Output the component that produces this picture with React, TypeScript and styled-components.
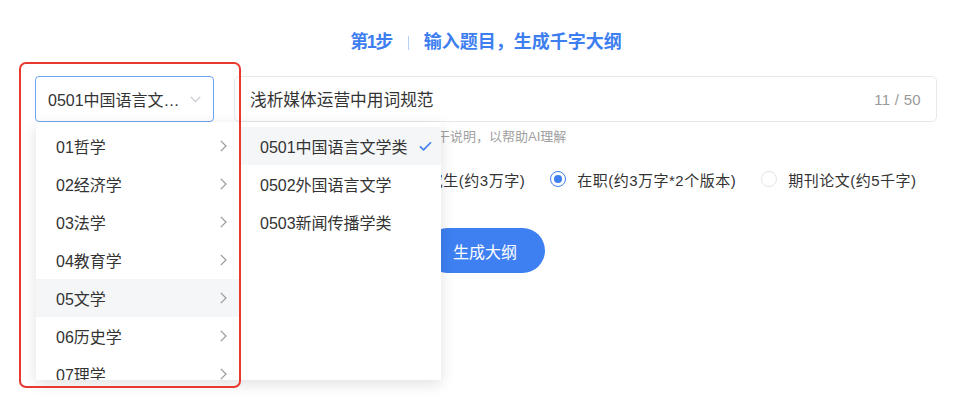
import React from "react";
import styled, { createGlobalStyle } from "styled-components";

const GlobalStyle = createGlobalStyle`
  * { box-sizing: border-box; }
  html, body { margin: 0; padding: 0; background: #ffffff; }
  body {
    font-family: "Liberation Sans", "Noto Sans CJK SC", sans-serif;
    color: #333333;
  }
`;

const Page = styled.div`
  position: relative;
  width: 970px;
  height: 399px;
  overflow: hidden;
  padding-top: 30px;
`;

const Title = styled.div`
  display: flex;
  justify-content: center;
  align-items: center;
  font-size: 18px;
  font-weight: 700;
  line-height: 25px;
  color: #3d7ef0;
  padding-left: 2px;
`;

const StepLabel = styled.span`
  letter-spacing: -1.5px;
`;

const Divider = styled.span`
  display: inline-block;
  width: 1px;
  height: 14px;
  background: #b9d0f6;
  margin: 0 15px 0 16px;
`;

const Main = styled.div`
  margin: 21px 33px 0 35px;
`;

const FieldRow = styled.div`
  display: flex;
  gap: 20px;
`;

const Select = styled.div`
  width: 179px;
  height: 46px;
  flex: none;
  border: 1px solid #6ea4f6;
  border-radius: 4px;
  padding: 0 12px 0 12px;
  display: flex;
  align-items: center;
  font-size: 16px;
  color: #333;
`;

const SelectText = styled.span`
  flex: 1;
  min-width: 0;
  white-space: nowrap;
  overflow: hidden;
  text-overflow: ellipsis;
`;

const InputBox = styled.div`
  flex: 1;
  height: 46px;
  border: 1px solid #e6e8ec;
  border-radius: 5px;
  padding: 0 15px 0 15px;
  display: flex;
  align-items: center;
  font-size: 16.7px;
  color: #333;
`;

const Counter = styled.span`
  margin-left: auto;
  font-size: 15px;
  letter-spacing: 0.3px;
  color: #999;
`;

const Hint = styled.div`
  margin: 6px 0 0 285px;
  font-size: 13px;
  line-height: 18px;
  color: #a0a0a0;
  white-space: nowrap;
`;

const RadioRow = styled.div`
  display: flex;
  gap: 25px;
  margin: 22px 0 0 201px;
  height: 22px;
  align-items: center;
`;

const RadioItem = styled.label`
  display: flex;
  align-items: center;
  gap: 11px;
  font-size: 15px;
  letter-spacing: 0.5px;
  color: #333;
  white-space: nowrap;
`;

const RadioCircle = styled.span<{ $checked?: boolean }>`
  width: 16px;
  height: 16px;
  flex: none;
  border-radius: 50%;
  border: 1px solid ${(p) => (p.$checked ? "#3d7ef0" : "#e2e5ea")};
  display: flex;
  align-items: center;
  justify-content: center;
  &::after {
    content: "";
    width: 8px;
    height: 8px;
    border-radius: 50%;
    background: ${(p) => (p.$checked ? "#3d7ef0" : "transparent")};
  }
`;

const ButtonRow = styled.div`
  display: flex;
  justify-content: center;
  margin-top: 38px;
`;

const PrimaryButton = styled.button`
  width: 120px;
  height: 45px;
  border: none;
  border-radius: 23px;
  background: #3e80f1;
  color: #ffffff;
  font-family: inherit;
  font-size: 16px;
  margin-left: -2px;
`;

const Popup = styled.div`
  position: absolute;
  left: 36px;
  top: 122px;
  display: flex;
  height: 258px;
  background: #ffffff;
  box-shadow: 0 4px 14px rgba(0, 0, 0, 0.12);
  overflow: hidden;
`;

const Column = styled.div<{ $width: number; $divider?: boolean }>`
  width: ${(p) => p.$width}px;
  padding-top: 5px;
  border-right: ${(p) => (p.$divider ? "1px solid #e8eaee" : "none")};
`;

const MenuItem = styled.div<{ $active?: boolean; $right: number }>`
  height: 38px;
  display: flex;
  align-items: center;
  justify-content: space-between;
  padding: 0 ${(p) => p.$right}px 0 20px;
  font-size: 16px;
  color: #333;
  white-space: nowrap;
  background: ${(p) => (p.$active ? "#f5f6f8" : "transparent")};
`;

const Annotation = styled.div`
  position: absolute;
  left: 19px;
  top: 62px;
  width: 222px;
  height: 326px;
  border: 2.5px solid #e8392e;
  border-radius: 7px;
  pointer-events: none;
`;

const ChevronDown = () => (
  <svg width="11" height="7" viewBox="0 0 11 7" fill="none">
    <path d="M0.8 0.8 L5.5 5.6 L10.2 0.8" stroke="#c3c7ce" strokeWidth="1.2" />
  </svg>
);

const ChevronRight = () => (
  <svg width="7" height="12" viewBox="0 0 7 12" fill="none">
    <path d="M0.8 0.8 L6 6 L0.8 11.2" stroke="#9a9a9a" strokeWidth="1.2" />
  </svg>
);

const Check = () => (
  <svg width="13" height="10" viewBox="0 0 13 10" fill="none">
    <path d="M1 5.4 L4.6 8.8 L12 1.2" stroke="#3d7ef0" strokeWidth="1.6" />
  </svg>
);

const categories = [
  "01哲学",
  "02经济学",
  "03法学",
  "04教育学",
  "05文学",
  "06历史学",
  "07理学",
];

const subCategories = ["0501中国语言文学类", "0502外国语言文学", "0503新闻传播学类"];

const options = [
  { label: "本科(约1万字)", checked: false },
  { label: "研究生(约3万字)", checked: false },
  { label: "在职(约3万字*2个版本)", checked: true },
  { label: "期刊论文(约5千字)", checked: false },
];

export default function App() {
  return (
    <>
      <GlobalStyle />
      <Page>
        <Title>
          <StepLabel>第1步</StepLabel>
          <Divider />
          <span>输入题目，生成千字大纲</span>
        </Title>
        <Main>
          <FieldRow>
            <Select>
              <SelectText>0501中国语言文学类</SelectText>
              <ChevronDown />
            </Select>
            <InputBox>
              <span>浅析媒体运营中用词规范</span>
              <Counter>11 / 50</Counter>
            </InputBox>
          </FieldRow>
          <Hint>可在题目后面添加若干说明，以帮助AI理解</Hint>
          <RadioRow>
            {options.map((o) => (
              <RadioItem key={o.label}>
                <RadioCircle $checked={o.checked} />
                {o.label}
              </RadioItem>
            ))}
          </RadioRow>
          <ButtonRow>
            <PrimaryButton>生成大纲</PrimaryButton>
          </ButtonRow>
        </Main>
        <Popup>
          <Column $width={204} $divider>
            {categories.map((c) => (
              <MenuItem key={c} $right={12} $active={c === "05文学"}>
                <span>{c}</span>
                <ChevronRight />
              </MenuItem>
            ))}
          </Column>
          <Column $width={201}>
            {subCategories.map((s, i) => (
              <MenuItem key={s} $right={9} $active={i === 0}>
                <span>{s}</span>
                {i === 0 && <Check />}
              </MenuItem>
            ))}
          </Column>
        </Popup>
        <Annotation />
      </Page>
    </>
  );
}
